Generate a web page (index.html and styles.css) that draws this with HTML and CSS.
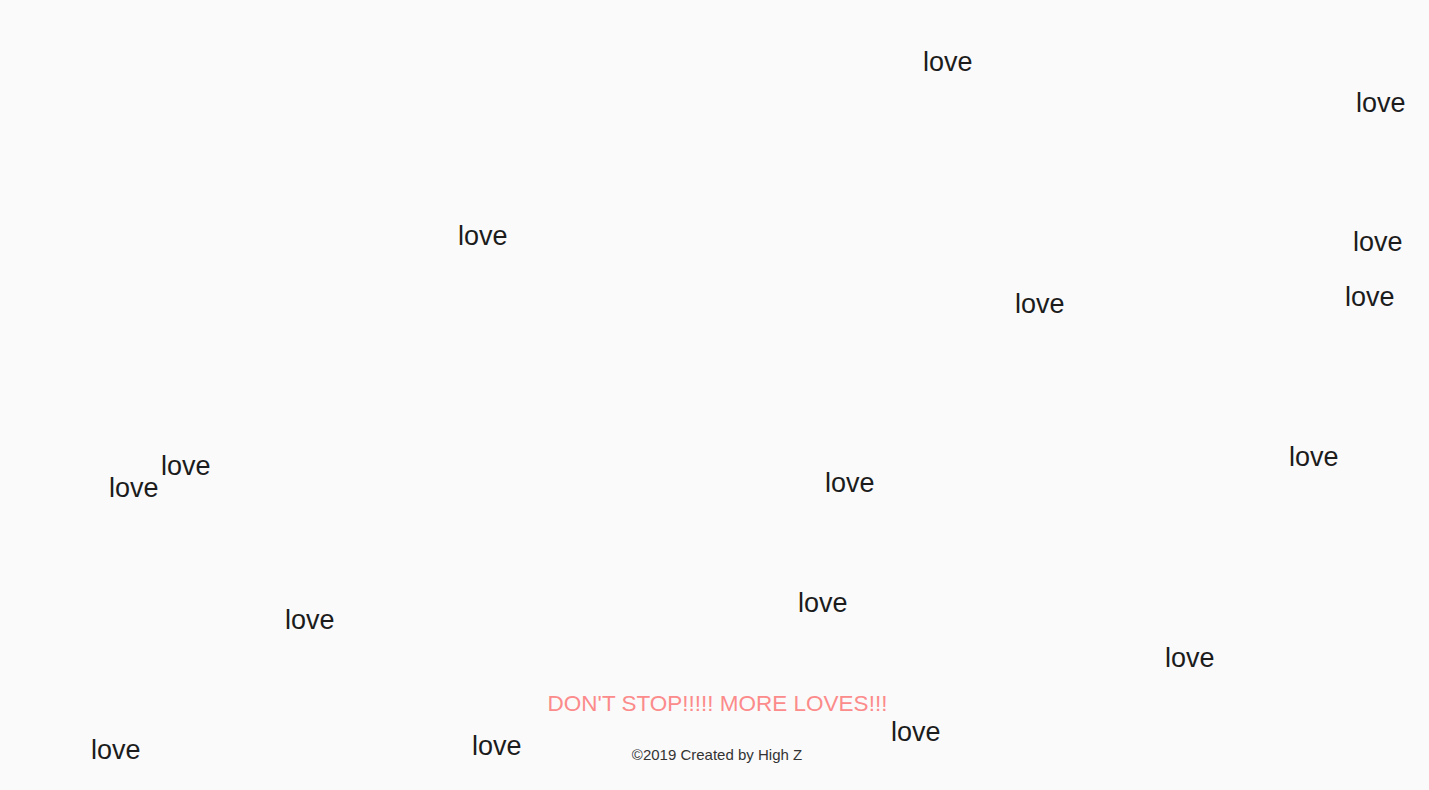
FILE: index.html
```html
<!DOCTYPE html>
<html lang="en">
<head>
<meta charset="utf-8">
<title>Love</title>
<link rel="stylesheet" href="styles.css">
</head>
<body>
<main class="canvas">
  <span class="love" style="left:923px;top:49px">love</span>
  <span class="love" style="left:1356px;top:90px">love</span>
  <span class="love" style="left:458px;top:223px">love</span>
  <span class="love" style="left:1353px;top:229px">love</span>
  <span class="love" style="left:1015px;top:291px">love</span>
  <span class="love" style="left:1345px;top:284px">love</span>
  <span class="love" style="left:161px;top:453px">love</span>
  <span class="love" style="left:109px;top:475px">love</span>
  <span class="love" style="left:825px;top:470px">love</span>
  <span class="love" style="left:1289px;top:444px">love</span>
  <span class="love" style="left:798px;top:590px">love</span>
  <span class="love" style="left:285px;top:607px">love</span>
  <span class="love" style="left:1165px;top:645px">love</span>
  <span class="love" style="left:891px;top:719px">love</span>
  <span class="love" style="left:472px;top:733px">love</span>
  <span class="love" style="left:91px;top:737px">love</span>
</main>
<footer class="footer">
  <p class="message">DON'T STOP!!!!! MORE LOVES!!!</p>
  <p class="copyright">©2019 Created by High Z</p>
</footer>
</body>
</html>
```

FILE: styles.css
```css
html, body {
  margin: 0;
  padding: 0;
}

body {
  position: relative;
  height: 100vh;
  background: #fafafa;
  font-family: "Liberation Sans", Arial, Helvetica, sans-serif;
  color: #1c1c1c;
  display: flex;
  flex-direction: column;
  justify-content: flex-end;
  overflow: hidden;
}

.canvas {
  position: absolute;
  inset: 0;
}

.love {
  position: absolute;
  font-size: 27px;
  line-height: 27px;
  white-space: nowrap;
  color: #1c1c1c;
}

.footer {
  position: relative;
  display: flex;
  flex-direction: column;
  align-items: center;
  padding-bottom: 26px;
}

.message {
  margin: 0 0 29px;
  font-size: 22.5px;
  line-height: 26px;
  color: #fc8b8b;
  padding-left: 6px;
}

.copyright {
  margin: 0;
  font-size: 15px;
  line-height: 18px;
  color: #333;
  padding-left: 5px;
}
```
